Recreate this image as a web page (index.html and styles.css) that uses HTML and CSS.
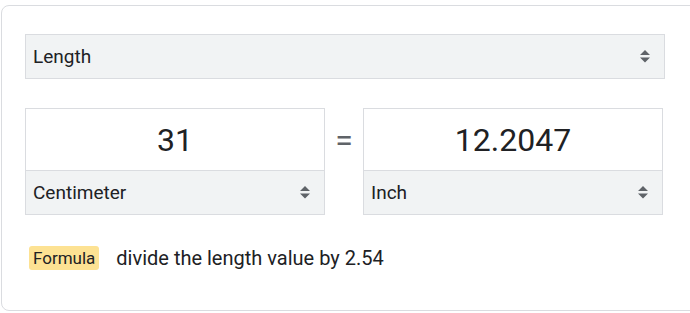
FILE: index.html
```html
<!DOCTYPE html>
<html>

<head>
    <meta name="viewport" content="width=device-width, initial-scale=1">
    <link rel="stylesheet" href="styles.css">
</head>

<body>

    <div class="card">
        <div class="picker picker-wide">
            <span>Length</span>
            <svg class="arrows" width="10" height="13" viewBox="0 0 10 13">
                <path d="M0 5 L5 0 L10 5 Z M0 7.5 L10 7.5 L5 12.5 Z" fill="#5f6368"/>
            </svg>
        </div>

        <div class="convert-row">
            <div class="unit-box">
                <div class="value">31</div>
                <div class="picker">
                    <span>Centimeter</span>
                    <svg class="arrows" width="10" height="13" viewBox="0 0 10 13">
                        <path d="M0 5 L5 0 L10 5 Z M0 7.5 L10 7.5 L5 12.5 Z" fill="#5f6368"/>
                    </svg>
                </div>
            </div>

            <div class="equals">=</div>

            <div class="unit-box">
                <div class="value">12.2047</div>
                <div class="picker">
                    <span>Inch</span>
                    <svg class="arrows" width="10" height="13" viewBox="0 0 10 13">
                        <path d="M0 5 L5 0 L10 5 Z M0 7.5 L10 7.5 L5 12.5 Z" fill="#5f6368"/>
                    </svg>
                </div>
            </div>
        </div>

        <div class="formula">
            <span class="badge">Formula</span>
            <span class="formula-text">divide the length value by 2.54</span>
        </div>
    </div>

</body>

</html>
```

FILE: styles.css
```css
body {
    margin: 0;
    font-family: Roboto, "Noto Sans", Arial, sans-serif;
    color: #202124;
    background: #fff;
    overflow: hidden;
}

.card {
    box-sizing: border-box;
    margin: 5px 0 0 1px;
    width: 700px;
    height: 306px;
    border: 1px solid #dadce0;
    border-radius: 8px;
    padding: 28px 23px 0 23px;
}

.picker {
    box-sizing: border-box;
    display: flex;
    align-items: center;
    justify-content: space-between;
    height: 45px;
    padding: 0 14px 0 7px;
    background: #f1f3f4;
    font-size: 19px;
}

.picker-wide {
    width: 640px;
    border: 1px solid #dadce0;
}

.arrows {
    display: block;
}

.convert-row {
    display: flex;
    align-items: flex-start;
    margin-top: 29px;
}

.unit-box {
    box-sizing: border-box;
    width: 300px;
    border: 1px solid #dadce0;
}

.unit-box .picker {
    height: 44px;
    border-top: 1px solid #dadce0;
}

.value {
    height: 61px;
    display: flex;
    align-items: center;
    justify-content: center;
    font-size: 32px;
}

.equals {
    width: 38px;
    height: 64px;
    display: flex;
    align-items: center;
    justify-content: center;
    font-size: 32px;
    color: #5f6368;
}

.formula {
    display: flex;
    align-items: center;
    margin-top: 31px;
    padding-left: 4px;
}

.badge {
    background: #fde293;
    border-radius: 3px;
    padding: 2px 4px;
    font-size: 17px;
    line-height: 20px;
}

.formula-text {
    margin-left: 17px;
    font-size: 20px;
}
```
